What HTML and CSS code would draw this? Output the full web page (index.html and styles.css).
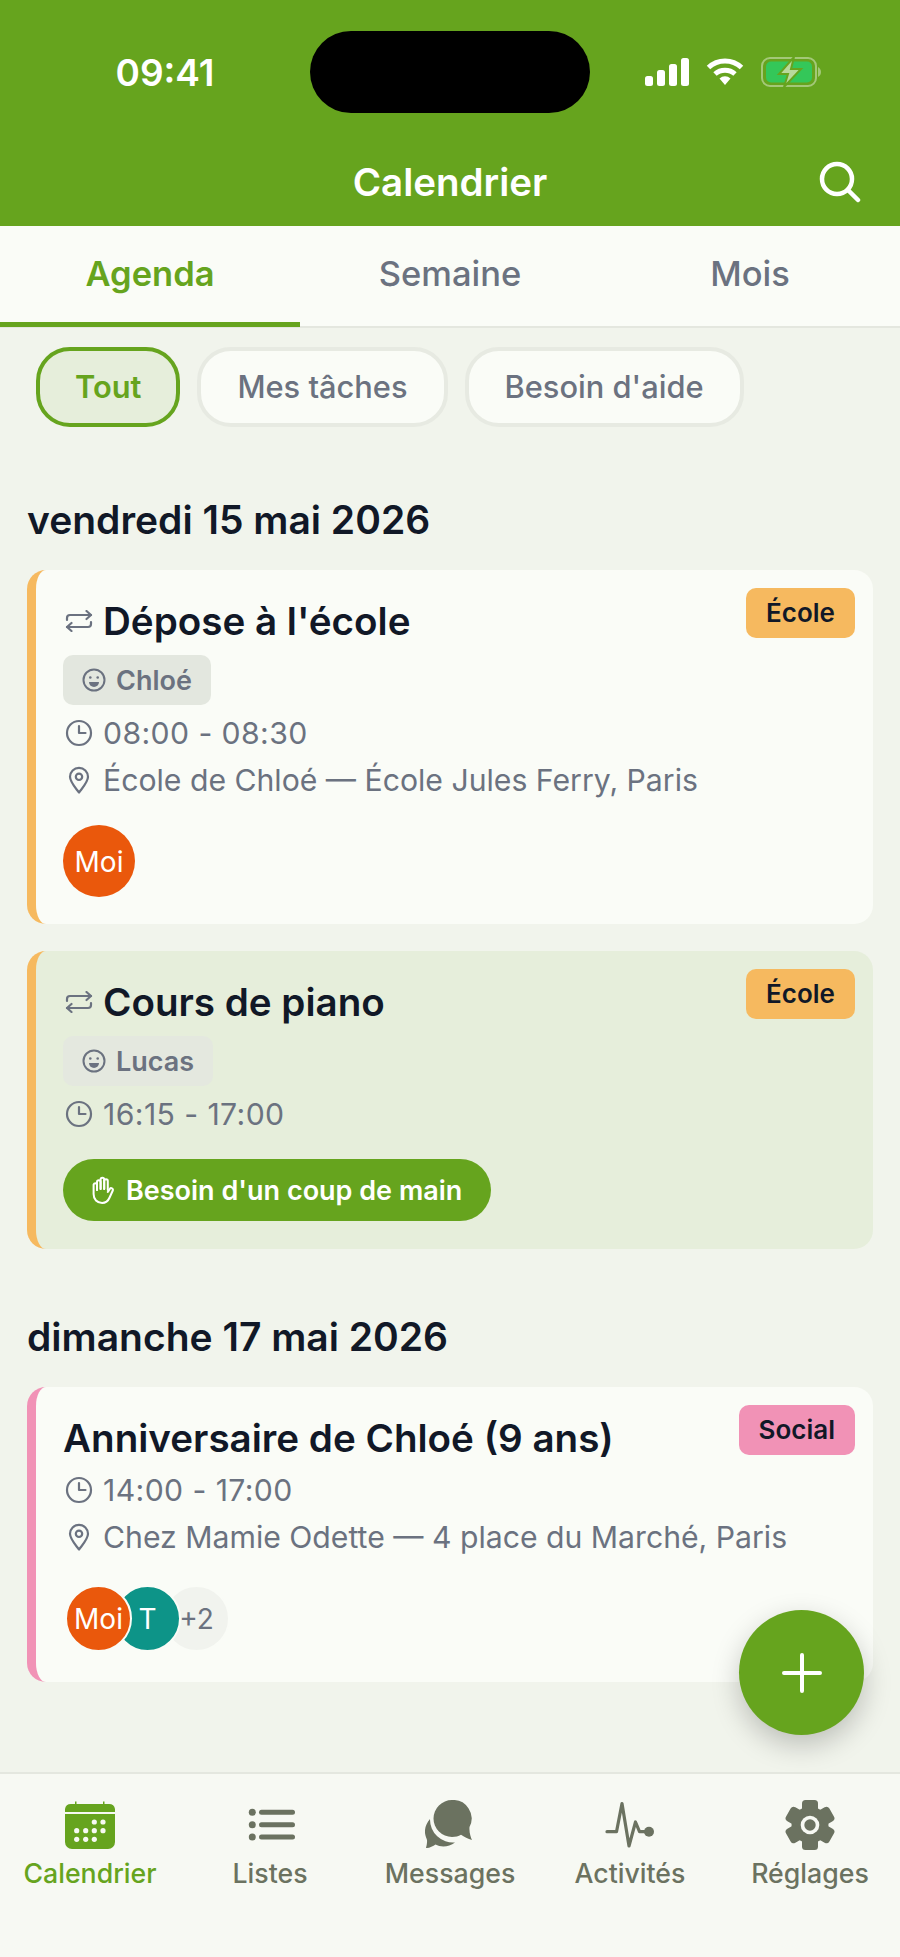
FILE: index.html
```html
<!DOCTYPE html>
<html lang="fr">
<head>
    <meta charset="UTF-8">
    <meta name="viewport" content="width=device-width, initial-scale=1.0">
    <title>Calendrier</title>
    <link rel="stylesheet" href="styles.css">
</head>
<body>
    <div class="app">
        <header class="top">
            <div class="status">
                <span class="time">09:41</span>
                <div class="island"></div>
                <div class="status-icons">
                    <svg width="44" height="28" viewBox="0 0 44 28"><rect x="0" y="18" width="8" height="10" rx="2.5" fill="#fff"/><rect x="12" y="12" width="8" height="16" rx="2.5" fill="#fff"/><rect x="24" y="6" width="8" height="22" rx="2.5" fill="#fff"/><rect x="36" y="0" width="8" height="28" rx="2.5" fill="#fff"/></svg>
                    <svg class="wifi" width="38" height="28" viewBox="0 0 38 28" fill="none" stroke="#fff" stroke-width="5"><path d="M2.5 9.5a24 24 0 0 1 33 0"/><path d="M9 16a15 15 0 0 1 20 0"/><path d="M13.5 20.5 19 27l5.500-6.500a8 8 0 0 0-11 0z" fill="#fff" stroke="none"/></svg>
                    <svg class="battery" width="62" height="30" viewBox="0 0 62 30"><rect x="1" y="1" width="54" height="28" rx="8" fill="none" stroke="#fff" stroke-opacity=".4" stroke-width="2"/><rect x="5" y="4.500" width="46" height="21" rx="5" fill="#34c759"/><path d="M57 10c2 1 3 3 3 5s-1 4-3 5z" fill="#fff" fill-opacity=".4"/><path d="M33 0 18 17h9l-4 13 17-18H30z" fill="#b9d99c" stroke="#66a41e" stroke-width="2"/></svg>
                </div>
            </div>
            <div class="title-bar">
                <h1>Calendrier</h1>
                <svg class="search" width="42" height="42" viewBox="0 0 42 42" fill="none" stroke="#fff" stroke-width="4.500" stroke-linecap="round"><circle cx="18" cy="18" r="15"/><path d="M29 29l10 10"/></svg>
            </div>
        </header>

        <nav class="tabs">
            <div class="tab active">Agenda</div>
            <div class="tab">Semaine</div>
            <div class="tab">Mois</div>
        </nav>

        <main class="content">
            <div class="chips">
                <div class="chip active">Tout</div>
                <div class="chip">Mes tâches</div>
                <div class="chip">Besoin d'aide</div>
            </div>

            <h2 class="day">vendredi 15 mai 2026</h2>

            <section class="card school">
                <span class="tag tag-school">École</span>
                <div class="card-title">
                    <svg class="ico" width="28" height="22" viewBox="0 0 28 22" fill="none" stroke="#6b7280" stroke-width="2.200" stroke-linecap="round" stroke-linejoin="round"><path d="M2 10V8a3 3 0 0 1 3-3h21"/><path d="M21.500 1 26 5l-4.500 4"/><path d="M26 12v2a3 3 0 0 1-3 3H2"/><path d="M6.500 13 2 17l4.500 4"/></svg>
                    <h3>Dépose à l'école</h3>
                </div>
                <div class="kid">
                    <svg width="24" height="24" viewBox="0 0 24 24" fill="none" stroke="#6b7280" stroke-width="2"><circle cx="12" cy="12" r="10.500"/><circle cx="8.300" cy="9.500" r="1.300" fill="#6b7280" stroke="none"/><circle cx="15.700" cy="9.500" r="1.300" fill="#6b7280" stroke="none"/><path d="M7 14h10a5 5 0 0 1-10 0z" fill="#6b7280" stroke="none"/></svg>
                    Chloé
                </div>
                <div class="meta when">
                    <svg class="ico" width="28" height="28" viewBox="0 0 28 28" fill="none" stroke="#6b7280" stroke-width="2.200" stroke-linecap="round" stroke-linejoin="round"><circle cx="14" cy="14" r="12"/><path d="M14 7v7h6.500"/></svg>
                    08:00 - 08:30
                </div>
                <div class="meta">
                    <svg class="ico" width="28" height="28" viewBox="0 0 28 28" fill="none" stroke="#6b7280" stroke-width="2.200" stroke-linejoin="round"><path d="M14 26.500C9 20 5 15.800 5 10.800a9 9 0 0 1 18 0c0 5-4 9.200-9 15.700z"/><circle cx="14" cy="10.800" r="3.200"/></svg>
                    École de Chloé — École Jules Ferry, Paris
                </div>
                <div class="avatars">
                    <div class="avatar me">Moi</div>
                </div>
            </section>

            <section class="card school help">
                <span class="tag tag-school">École</span>
                <div class="card-title">
                    <svg class="ico" width="28" height="22" viewBox="0 0 28 22" fill="none" stroke="#6b7280" stroke-width="2.200" stroke-linecap="round" stroke-linejoin="round"><path d="M2 10V8a3 3 0 0 1 3-3h21"/><path d="M21.500 1 26 5l-4.500 4"/><path d="M26 12v2a3 3 0 0 1-3 3H2"/><path d="M6.500 13 2 17l4.500 4"/></svg>
                    <h3>Cours de piano</h3>
                </div>
                <div class="kid faded">
                    <svg width="24" height="24" viewBox="0 0 24 24" fill="none" stroke="#6b7280" stroke-width="2"><circle cx="12" cy="12" r="10.500"/><circle cx="8.300" cy="9.500" r="1.300" fill="#6b7280" stroke="none"/><circle cx="15.700" cy="9.500" r="1.300" fill="#6b7280" stroke="none"/><path d="M7 14h10a5 5 0 0 1-10 0z" fill="#6b7280" stroke="none"/></svg>
                    Lucas
                </div>
                <div class="meta when">
                    <svg class="ico" width="28" height="28" viewBox="0 0 28 28" fill="none" stroke="#6b7280" stroke-width="2.200" stroke-linecap="round" stroke-linejoin="round"><circle cx="14" cy="14" r="12"/><path d="M14 7v7h6.500"/></svg>
                    16:15 - 17:00
                </div>
                <div class="help-btn">
                    <svg width="22" height="28" viewBox="0 0 22 28" fill="none" stroke="#fff" stroke-width="2" stroke-linecap="round" stroke-linejoin="round"><path d="M5 14V6a1.800 1.800 0 0 1 3.600 0v7"/><path d="M8.600 13V3.500a1.800 1.800 0 0 1 3.600 0V13"/><path d="M12.200 13V5a1.800 1.800 0 0 1 3.600 0v9"/><path d="M5 14v-5.500a1.800 1.800 0 0 0-3.400 0V18c0 5.500 3.500 9 8.500 9 4 0 6-2 7.500-5.500l3.200-7c.7-2-1.900-3.400-3-1.500L15.800 16"/></svg>
                    Besoin d'un coup de main
                </div>
            </section>

            <h2 class="day day-next">dimanche 17 mai 2026</h2>

            <section class="card social">
                <span class="tag tag-social">Social</span>
                <div class="card-title">
                    <h3>Anniversaire de Chloé (9 ans)</h3>
                </div>
                <div class="meta when">
                    <svg class="ico" width="28" height="28" viewBox="0 0 28 28" fill="none" stroke="#6b7280" stroke-width="2.200" stroke-linecap="round" stroke-linejoin="round"><circle cx="14" cy="14" r="12"/><path d="M14 7v7h6.500"/></svg>
                    14:00 - 17:00
                </div>
                <div class="meta">
                    <svg class="ico" width="28" height="28" viewBox="0 0 28 28" fill="none" stroke="#6b7280" stroke-width="2.200" stroke-linejoin="round"><path d="M14 26.500C9 20 5 15.800 5 10.800a9 9 0 0 1 18 0c0 5-4 9.200-9 15.700z"/><circle cx="14" cy="10.800" r="3.200"/></svg>
                    Chez Mamie Odette — 4 place du Marché, Paris
                </div>
                <div class="avatars group">
                    <div class="avatar me">Moi</div>
                    <div class="avatar teal">T</div>
                    <div class="avatar more">+2</div>
                </div>
            </section>

            <div class="fab">
                <svg width="40" height="40" viewBox="0 0 40 40" stroke="#fff" stroke-width="4" stroke-linecap="round"><path d="M20 2v36M2 20h36"/></svg>
            </div>
        </main>

        <footer class="bottom-nav">
            <div class="nav-item active">
                <svg width="50" height="50" viewBox="0 0 50 50" fill="#66a41e"><path d="M10 1.500h1.500V4H38V1.500h1.500V4H44a6 6 0 0 1 6 5v3H0V9a6 6 0 0 1 6-5h4z"/><path d="M0 14h50v28a7 7 0 0 1-7 7H7a7 7 0 0 1-7-7z"/><g fill="#f7f9f3"><circle cx="29.300" cy="22" r="2.600"/><circle cx="38" cy="22" r="2.600"/><circle cx="11.700" cy="30.700" r="2.600"/><circle cx="20.700" cy="30.700" r="2.600"/><circle cx="29.300" cy="30.700" r="2.600"/><circle cx="38" cy="30.700" r="2.600"/><circle cx="11.700" cy="39.300" r="2.600"/><circle cx="20.700" cy="39.300" r="2.600"/><circle cx="29.300" cy="39.300" r="2.600"/></g></svg>
                <span>Calendrier</span>
            </div>
            <div class="nav-item">
                <svg width="50" height="50" viewBox="0 0 50 50" fill="#6b7260"><circle cx="7.300" cy="12.300" r="3.500"/><circle cx="7.300" cy="24.700" r="3.500"/><circle cx="7.300" cy="37" r="3.500"/><rect x="14" y="9.800" width="36" height="5" rx="2.500"/><rect x="14" y="22.200" width="36" height="5" rx="2.500"/><rect x="14" y="34.500" width="36" height="5" rx="2.500"/></svg>
                <span>Listes</span>
            </div>
            <div class="nav-item">
                <svg width="50" height="50" viewBox="0 0 50 50" fill="#6b7260"><path d="M5 19C1.500 23-.5 28 0 33c.3 3 1.500 5 2 7 .3 3-.5 6-1 8 3 .5 7-2 9.500-3.500 5.500 3 13.500 2.500 19.500-2A23 23 0 0 1 5 19z"/><path d="M27 0a18.500 18.500 0 0 0 0 37c3.500 0 6.500-1 9-2.300 3 1.800 7 4.300 11 5.300-1-2.500-3-7-2.500-13A18.500 18.500 0 0 0 27 0z"/></svg>
                <span>Messages</span>
            </div>
            <div class="nav-item">
                <svg width="50" height="50" viewBox="0 0 50 50" fill="none" stroke="#6b7260" stroke-width="3.200" stroke-linecap="round" stroke-linejoin="round"><path d="M2 31.700h9.500L17 3.500l7 42.500 6.500-24 4 9.700h10"/><circle cx="44" cy="31.700" r="5" fill="#6b7260" stroke="none"/></svg>
                <span>Activités</span>
            </div>
            <div class="nav-item">
                <svg width="50" height="50" viewBox="0 0 50 50" fill="#6b7260"><circle cx="25" cy="25" r="18.500"/><rect x="17" y="0" width="16" height="50" rx="3.500"/><rect x="17" y="0" width="16" height="50" rx="3.500" transform="rotate(60 25 25)"/><rect x="17" y="0" width="16" height="50" rx="3.500" transform="rotate(120 25 25)"/><circle cx="25" cy="25" r="9.300" fill="#f7f9f3"/><circle cx="25" cy="25" r="5.700"/></svg>
                <span>Réglages</span>
            </div>
        </footer>
    </div>
</body>
</html>
```

FILE: styles.css
```css
* {
    box-sizing: border-box;
}
body {
    margin: 0;
    font-family: Inter, "Liberation Sans", sans-serif;
    background-color: #f1f4ec;
    color: #111827;
}
.app {
    display: flex;
    flex-direction: column;
    height: 1957px;
    overflow: hidden;
}

/* green header */
.top {
    background-color: #66a41e;
    height: 226px;
    color: #fff;
    padding-top: 31px;
}
.status {
    display: grid;
    grid-template-columns: 310px 280px 310px;
    align-items: center;
    height: 82px;
}
.time {
    font-size: 37px;
    font-weight: 600;
    text-align: center;
    padding-left: 20px;
}
.island {
    height: 82px;
    background: #000;
    border-radius: 41px;
}
.status-icons {
    display: flex;
    align-items: center;
    gap: 17px;
    padding-left: 55px;
}
.title-bar {
    position: relative;
    margin-top: 46px;
    text-align: center;
}
.title-bar h1 {
    margin: 0;
    font-size: 38.5px;
    line-height: 46px;
    font-weight: 600;
}
.search {
    position: absolute;
    right: 39px;
    top: 2px;
}

/* tabs */
.tabs {
    display: flex;
    background-color: #fafcf7;
    height: 102px;
    border-bottom: 2px solid #e4e7df;
}
.tab {
    flex: 1;
    text-align: center;
    font-size: 34.500px;
    font-weight: 500;
    line-height: 96px;
    color: #6b7280;
    height: 101px;
}
.tab.active {
    color: #66a41e;
    font-weight: 600;
    border-bottom: 5px solid #66a41e;
}

.content {
    flex: 1;
    position: relative;
    padding: 19px 27px 0;
}

/* filter chips */
.chips {
    display: flex;
    gap: 17px;
    padding-left: 9px;
}
.chip {
    height: 80px;
    line-height: 72px;
    padding: 0 36px;
    border: 4px solid #e7eae2;
    border-radius: 34px;
    background-color: #fafcf7;
    color: #6b7280;
    font-size: 30.800px;
    font-weight: 500;
}
.chip.active {
    padding: 0 35px;
    border-color: #66a41e;
    background-color: #e6eedb;
    color: #66a41e;
    font-weight: 600;
}

.day {
    margin: 70px 0 0;
    font-size: 39px;
    line-height: 46px;
    font-weight: 600;
}
.day-next {
    margin-top: 65px;
}

/* cards */
.card {
    position: relative;
    margin-top: 27px;
    padding: 28px 18px 0 27px;
    background-color: #fafcf7;
    border-left: 9px solid #f6b95f;
    border-radius: 19px;
}
.card.school {
    height: 354px;
}
.card.help {
    height: 298px;
    background-color: #e6eedb;
}
.card.social {
    height: 295px;
    border-left-color: #f192b6;
}
.tag {
    position: absolute;
    top: 18px;
    right: 18px;
    height: 50px;
    line-height: 50px;
    padding: 0 20px;
    border-radius: 10px;
    font-size: 26px;
    font-weight: 600;
}
.tag-school {
    background-color: #f6b95f;
}
.tag-social {
    background-color: #f192b6;
}
.card-title {
    display: flex;
    align-items: center;
    gap: 10px;
    height: 46px;
}
.card-title h3 {
    margin: 0;
    font-size: 38.600px;
    line-height: 46px;
    font-weight: 600;
}
.ico {
    flex: none;
    margin-left: 2px;
}
.kid {
    display: inline-flex;
    align-items: center;
    gap: 10px;
    height: 50px;
    margin-top: 11px;
    padding: 0 19px;
    background-color: #e3e7df;
    border-radius: 10px;
    color: #6b7280;
    font-size: 27px;
    font-weight: 600;
}
.kid.faded {
    background-color: #e4e8df;
}
.meta {
    display: flex;
    align-items: center;
    gap: 10px;
    height: 47px;
    color: #6b7280;
    font-size: 30.200px;
}
.meta.when {
    letter-spacing: 0.4px;
    margin-top: 4px;
}
.card-title + .meta.when {
    margin-top: 5px;
}

.avatars {
    display: flex;
    margin-top: 22px;
}
.avatar {
    width: 72px;
    height: 72px;
    line-height: 74px;
    border-radius: 50%;
    text-align: center;
    color: #fff;
    font-size: 28px;
}
.avatar.me {
    background-color: #ea580c;
}
.avatar.teal {
    background-color: #0d9488;
}
.avatar.more {
    background-color: #f1f3ee;
    color: #6b7280;
}
.group {
    margin-top: 25px;
    padding-left: 2px;
}
.group .avatar {
    width: 67px;
    height: 67px;
    line-height: 65px;
    border: 2px solid #fafcf7;
    margin-right: -18px;
}
.group .me {
    position: relative;
    z-index: 2;
}
.group .teal {
    position: relative;
    z-index: 1;
}

.help-btn {
    display: inline-flex;
    align-items: center;
    gap: 12px;
    height: 62px;
    margin-top: 22px;
    padding: 0 29px;
    background-color: #66a41e;
    border-radius: 31px;
    color: #fff;
    font-size: 27px;
    font-weight: 600;
}

.fab {
    position: absolute;
    right: 36px;
    bottom: 37px;
    width: 125px;
    height: 125px;
    border-radius: 50%;
    background-color: #66a41e;
    box-shadow: 0 10px 28px rgba(0,0,0,0.22);
    display: flex;
    align-items: center;
    justify-content: center;
}

/* bottom nav */
.bottom-nav {
    display: flex;
    height: 185px;
    padding-top: 26px;
    background-color: #f7f9f3;
    border-top: 2px solid #e4e7df;
}
.nav-item {
    flex: 1;
    display: flex;
    flex-direction: column;
    align-items: center;
    color: #6b7260;
    font-size: 26.700px;
    font-weight: 500;
}
.nav-item span {
    margin-top: 7px;
}
.nav-item.active {
    color: #66a41e;
}
```
